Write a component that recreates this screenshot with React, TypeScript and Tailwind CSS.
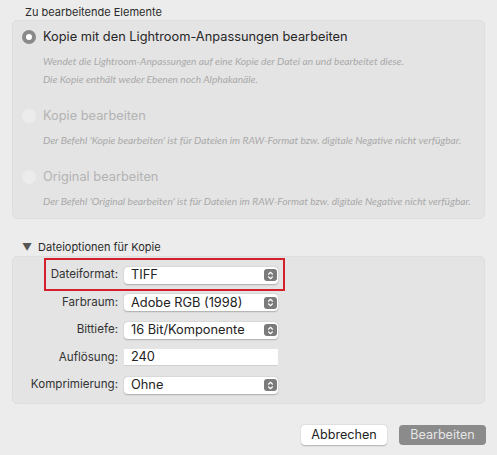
import React from 'react';

const ui = { fontFamily: 'Inter, "Liberation Sans", sans-serif' };
const desc = { fontFamily: 'Lato, "Open Sans", sans-serif' };

const options = [
  {
    label: 'Kopie mit den Lightroom-Anpassungen bearbeiten',
    lines: [
      'Wendet die Lightroom-Anpassungen auf eine Kopie der Datei an und bearbeitet diese.',
      'Die Kopie enthält weder Ebenen noch Alphakanäle.',
    ],
    active: true,
  },
  {
    label: 'Kopie bearbeiten',
    lines: ["Der Befehl 'Kopie bearbeiten' ist für Dateien im RAW-Format bzw. digitale Negative nicht verfügbar."],
    active: false,
  },
  {
    label: 'Original bearbeiten',
    lines: ["Der Befehl 'Original bearbeiten' ist für Dateien im RAW-Format bzw. digitale Negative nicht verfügbar."],
    active: false,
  },
];

const fields = [
  { label: 'Dateiformat:', value: 'TIFF', select: true },
  { label: 'Farbraum:', value: 'Adobe RGB (1998)', select: true },
  { label: 'Bittiefe:', value: '16 Bit/Komponente', select: true },
  { label: 'Auflösung:', value: '240', select: false },
  { label: 'Komprimierung:', value: 'Ohne', select: true },
];

const Stepper: React.FC = () => (
  <span className="flex h-[12px] w-[13px] items-center justify-center rounded-[3px] bg-[#7b7b7b]">
    <svg width="7" height="9" viewBox="0 0 7 9" fill="none" stroke="white" strokeWidth="1.2" strokeLinecap="round" strokeLinejoin="round">
      <path d="M1.5 3.2 L3.5 1.3 L5.5 3.2" />
      <path d="M1.5 5.8 L3.5 7.7 L5.5 5.8" />
    </svg>
  </span>
);

const App: React.FC = () => {
  return (
    <div className="h-[455px] w-[497px] overflow-hidden bg-[#ececec] text-[#262626]" style={ui}>
      <div className="pl-[25px] pt-[4px] text-[11px] leading-[16px] text-[#2b2b2b]">Zu bearbeitende Elemente</div>

      <div className="mx-[12px] h-[199px] rounded-[5px] border border-[#dedede] bg-[#e4e4e4] px-[9px] pt-[6px]">
        {options.map((o, i) => (
          <div key={i} className={i === 0 ? '' : 'mt-[18px]'}>
            <div className="flex h-[20px] items-center gap-[7px]">
              {o.active ? (
                <span className="flex h-[14px] w-[14px] items-center justify-center rounded-full bg-[#8a8a8a]">
                  <span className="h-[6px] w-[6px] rounded-full bg-white" />
                </span>
              ) : (
                <span className="h-[14px] w-[14px] rounded-full bg-[#ececec]" />
              )}
              <span className={`text-[12.8px] ${o.active ? 'text-[#262626]' : 'text-[#b3b3b3]'}`}>{o.label}</span>
            </div>
            <div className="mt-[5px] whitespace-nowrap pl-[21px] text-[10.2px] italic leading-[18px] text-[#a9a9a9]" style={desc}>
              {o.lines.map((l, j) => (
                <div key={j}>{l}</div>
              ))}
            </div>
          </div>
        ))}
      </div>

      <div className="mt-[20px] flex h-[16px] items-center gap-[6px] pl-[22px] text-[11px] text-[#2b2b2b]">
        <span className="text-[10px] text-[#555]">▼</span>
        <span>Dateioptionen für Kopie</span>
      </div>

      <div className="relative mx-[12px] mt-[1px] h-[148px] rounded-[5px] border border-[#dedede] bg-[#e4e4e4] pt-[9px]">
        <div className="absolute left-[31px] top-[1px] h-[33px] w-[241px] border-2 border-[#d4202a]" />
        {fields.map((f, i) => (
          <div key={i} className="mb-[9.5px] flex h-[18px] items-center">
            <div className="w-[105px] text-right text-[11.6px] text-[#333]">{f.label}</div>
            <div
              className={`ml-[6px] flex h-[17px] w-[154px] items-center justify-between bg-white pl-[7px] pr-[1px] text-[12.8px] text-[#222] ${
                f.select ? 'rounded-[4px] shadow-[0_0.5px_1.5px_rgba(0,0,0,0.25)]' : 'border-b border-[#d0d0d0]'
              }`}
            >
              <span>{f.value}</span>
              {f.select && <Stepper />}
            </div>
          </div>
        ))}
      </div>

      <div className="mr-[11px] mt-[21px] flex justify-end gap-[12px] text-[12.6px]">
        <button className="h-[20px] w-[86px] rounded-[4px] bg-white text-[#222] shadow-[0_0.5px_1.5px_rgba(0,0,0,0.25)]">Abbrechen</button>
        <button className="h-[20px] w-[87px] rounded-[4px] bg-[#8b8b8b] text-[#e6e6e6]">Bearbeiten</button>
      </div>
    </div>
  );
};

export default App;
